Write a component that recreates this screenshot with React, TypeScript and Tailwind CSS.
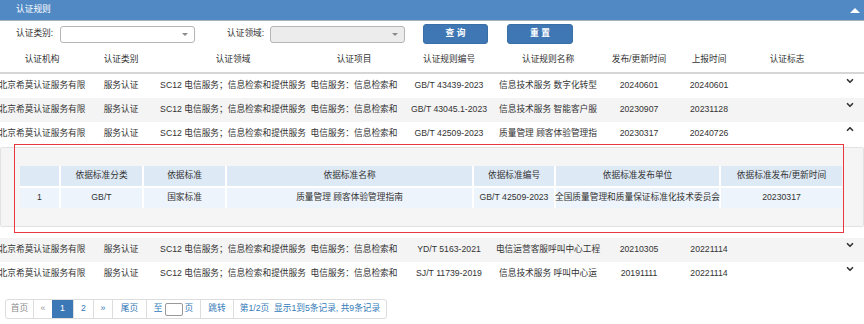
import { ChevronDown, ChevronUp } from "lucide-react";

const COLS = "grid grid-cols-[84px_74px_150px_92px_98px_100px_82px_58px_98px_28px]";
const SUB_COLS = "grid grid-cols-[39px_81px_81px_245px_80px_163px_121px] gap-[2px] bg-white";

const HEAD = ["认证机构", "认证类别", "认证领域", "认证项目", "认证规则编号", "认证规则名称", "发布/更新时间", "上报时间", "认证标志"];

type Row = { code: string; name: string; pub: string; rep: string; open?: boolean };

const TOP: Row[] = [
  { code: "GB/T 43439-2023", name: "信息技术服务 数字化转型", pub: "20240601", rep: "20240601" },
  { code: "GB/T 43045.1-2023", name: "信息技术服务 智能客户服", pub: "20230907", rep: "20231128" },
  { code: "GB/T 42509-2023", name: "质量管理 顾客体验管理指", pub: "20230317", rep: "20240726", open: true },
];

const BOTTOM: Row[] = [
  { code: "YD/T 5163-2021", name: "电信运营客服呼叫中心工程", pub: "20210305", rep: "20221114" },
  { code: "SJ/T 11739-2019", name: "信息技术服务 呼叫中心运", pub: "20191111", rep: "20221114" },
];

function DataRow({ row, shaded }: { row: Row; shaded: boolean }) {
  const cells = ["北京希莫认证服务有限", "服务认证", "SC12 电信服务；信息检索和提供服务", "电信服务：信息检索和", row.code, row.name, row.pub, row.rep, ""];
  return (
    <div className={`${COLS} h-[24px] ${shaded ? "bg-[#f4f4f4]" : "bg-white"}`}>
      {cells.map((c, i) => (
        <div key={i} className="flex items-center justify-center whitespace-nowrap">
          {c}
        </div>
      ))}
      <div className="flex justify-center pt-[2px]">
        {row.open ? (
          <ChevronUp size={10} strokeWidth={4} className="text-[#333]" />
        ) : (
          <ChevronDown size={10} strokeWidth={4} className="text-[#333]" />
        )}
      </div>
    </div>
  );
}

function Select({ disabled }: { disabled?: boolean }) {
  return (
    <div
      className={`w-[135px] h-[17px] border border-[#b5b5b5] rounded-[3px] flex items-center justify-end pr-[6px] ${
        disabled ? "bg-[#ececec]" : "bg-white"
      }`}
    >
      <span className="border-x-[3px] border-t-[3px] border-x-transparent border-t-[#8a8a8a]" />
    </div>
  );
}

export default function App() {
  return (
    <div className="relative w-[864px] h-[324px] overflow-hidden bg-white text-[8.7px] text-[#333] font-['Liberation_Sans','Noto_Sans_CJK_SC',sans-serif]">
      {/* Title bar */}
      <div className="h-[21px] bg-[#5189c5] border-b border-[#a7b3bf] flex items-center justify-between pl-[16px] pr-[4px]">
        <span className="text-white">认证规则</span>
        <span className="border-x-[5px] border-b-[5px] border-x-transparent border-b-white" />
      </div>

      {/* Filters */}
      <div className="h-[26px] flex items-center">
        <span className="ml-[16px] w-[44px]">认证类别:</span>
        <Select />
        <span className="ml-[32px] w-[43px]">认证领域:</span>
        <Select disabled />
        <button className="ml-[18px] w-[65px] h-[20px] rounded-[3px] bg-[#3f77b4] border border-[#3a6ea7] text-white font-bold">
          查 询
        </button>
        <button className="ml-[19px] w-[66px] h-[20px] rounded-[3px] bg-[#3f77b4] border border-[#3a6ea7] text-white font-bold">
          重 置
        </button>
      </div>

      {/* Table head */}
      <div className={`${COLS} h-[27px] border-b-2 border-[#d6d6d6]`}>
        {HEAD.map((h) => (
          <div key={h} className="flex items-center justify-center whitespace-nowrap">
            {h}
          </div>
        ))}
        <div />
      </div>

      {TOP.map((r, i) => (
        <DataRow key={r.code} row={r} shaded={i % 2 === 1} />
      ))}

      {/* Expanded detail */}
      <div className="mt-[1px] mb-[11px] h-[80px] bg-[#f5f5f5] border border-[#e2e2e2] rounded-[2px] pt-[18px] pl-[19px]">
        <div className={SUB_COLS + " w-[822px]"}>
          {["", "依据标准分类", "依据标准", "依据标准名称", "依据标准编号", "依据标准发布单位", "依据标准发布/更新时间"].map((h, i) => (
            <div key={i} className="h-[20px] bg-[#dde9f5] flex items-center justify-center whitespace-nowrap">
              {h}
            </div>
          ))}
          {["1", "GB/T", "国家标准", "质量管理 顾客体验管理指南", "GB/T 42509-2023", "全国质量管理和质量保证标准化技术委员会", "20230317"].map((c, i) => (
            <div key={i} className="h-[20px] bg-[#edf4fb] flex items-center justify-center whitespace-nowrap">
              {c}
            </div>
          ))}
        </div>
      </div>

      {BOTTOM.map((r, i) => (
        <DataRow key={r.code} row={r} shaded={i % 2 === 0} />
      ))}

      {/* Pagination */}
      <div className="mt-[13px] ml-[5px] w-fit h-[20px] flex border border-[#dddddd] rounded-[3px] text-[#337ab7]">
        <div className="w-[27px] flex items-center justify-center text-[#8a8a8a]">首页</div>
        <div className="w-[19px] flex items-center justify-center border-l border-[#dddddd] text-[#999]">«</div>
        <div className="w-[21px] flex items-center justify-center bg-[#3c78b5] text-white">1</div>
        <div className="w-[20px] flex items-center justify-center border-l border-[#dddddd]">2</div>
        <div className="w-[19px] flex items-center justify-center border-l border-[#dddddd]">»</div>
        <div className="w-[34px] flex items-center justify-center border-l border-[#dddddd]">尾页</div>
        <div className="w-[54px] flex items-center justify-center gap-[2px] border-l border-[#dddddd]">
          <span>至</span>
          <span className="w-[18px] h-[13px] border border-[#999] rounded-[2px] bg-white" />
          <span>页</span>
        </div>
        <div className="w-[33px] flex items-center justify-center border-l border-[#dddddd]">跳转</div>
        <div className="w-[153px] flex items-center justify-center border-l border-[#dddddd] whitespace-nowrap">
          第1/2页&nbsp;&nbsp;显示1到5条记录, 共9条记录
        </div>
      </div>

      {/* Highlight frame */}
      <div className="absolute left-[14px] top-[144px] w-[830px] h-[89px] border border-[#e8383d] pointer-events-none" />
    </div>
  );
}
